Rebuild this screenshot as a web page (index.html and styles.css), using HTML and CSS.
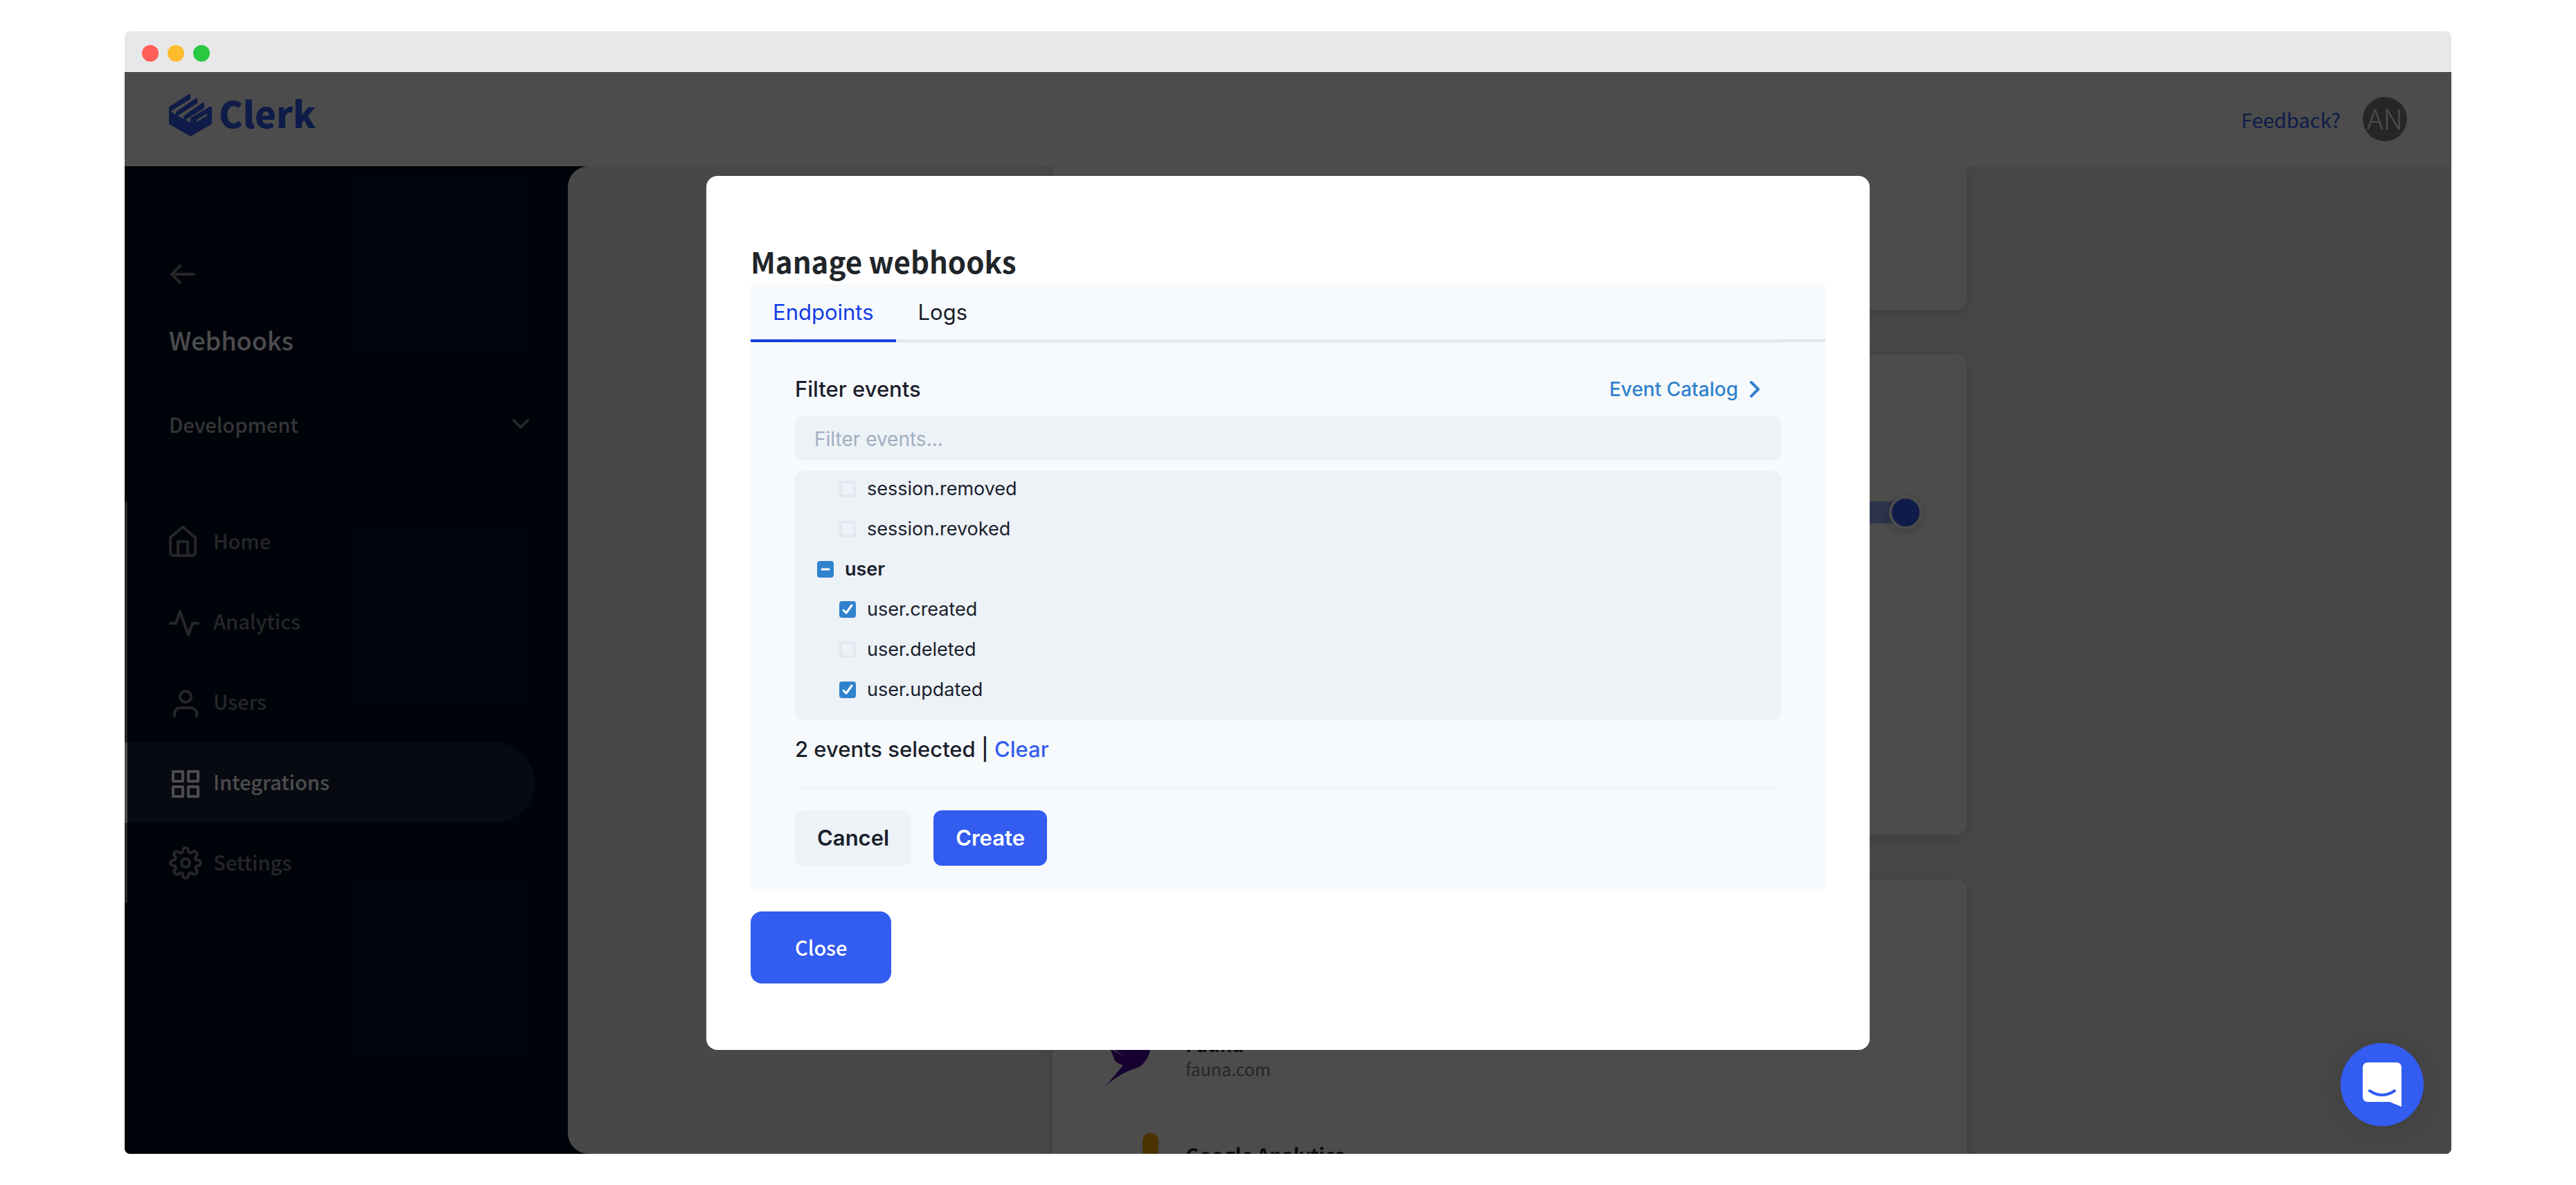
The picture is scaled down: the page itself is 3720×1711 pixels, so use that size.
FILE: index.html
```html
<!DOCTYPE html>
<html lang="en">
<head>
<meta charset="utf-8">
<title>Clerk – Manage webhooks</title>
<link rel="stylesheet" href="styles.css">
</head>
<body>
<div class="window">
  <div class="titlebar">
    <span class="dot dot-red"></span>
    <span class="dot dot-yellow"></span>
    <span class="dot dot-green"></span>
  </div>
  <div class="app">
    <header class="header">
      <a class="brand" href="#">
        <svg class="brand-mark" viewBox="0 0 62 62" aria-hidden="true">
          <path fill-rule="evenodd" d="M0 24L31 41V36q0-2 2-3L59 18q3-1 3 2v23L31 61 0 43zM40 40v-3L55 28v3z"/>
          <path d="M0 25V20q0-2 2-3L29 0q2-1 2 2v5L2 25z"/>
          <path d="M10 30v-3q0-2 2-3L39 6q2-1 2 2v5L13 31z"/>
          <path d="M21 36v-3q0-2 2-3L49 12q2-1 2 2v6L24 37z"/>
        </svg>
        <span class="brand-name">Clerk</span>
      </a>
      <div class="account">
        <a class="feedback" href="#">Feedback?</a>
        <span class="avatar">AN</span>
      </div>
    </header>
    <div class="body">
      <aside class="sidebar">
        <a class="back" href="#" aria-label="Back">
          <svg class="icon-back" viewBox="0 0 36 28"><path d="M2 14H34M14 2L2 14l12 12"/></svg>
        </a>
        <h2 class="app-name">Webhooks</h2>
        <button class="env" type="button">
          <span>Development</span>
          <svg class="icon-chevron" viewBox="0 0 28 18"><path d="M4 4l10 10L24 4"/></svg>
        </button>
        <nav class="nav">
          <a class="nav-item" href="#">
            <svg class="nav-icon" viewBox="0 0 48 48"><path d="M2 18L20 3l18 15v22a4 4 0 0 1-4 4H6a4 4 0 0 1-4-4z M13 43V24h14v19"/></svg>
            <span class="nav-text">Home</span>
          </a>
          <a class="nav-item" href="#">
            <svg class="nav-icon" viewBox="0 0 48 48"><path d="M2 26h8l6-17 12 34 6-17h8"/></svg>
            <span class="nav-text">Analytics</span>
          </a>
          <a class="nav-item" href="#">
            <svg class="nav-icon" viewBox="0 0 48 48"><circle cx="24" cy="16" r="8"/><path d="M8 44v-4a8 8 0 0 1 8-8h16a8 8 0 0 1 8 8v4"/></svg>
            <span class="nav-text">Users</span>
          </a>
          <a class="nav-item active" href="#">
            <svg class="nav-icon" viewBox="0 0 48 48"><path d="M6 8h14v14H6zM28 8h14v14H28zM6 30h14v14H6zM28 30h14v14H28z"/></svg>
            <span class="nav-text">Integrations</span>
          </a>
          <a class="nav-item" href="#">
            <svg class="nav-icon nav-icon-gear" viewBox="0 0 24 24"><circle cx="12" cy="12" r="3"/><path d="M19.400 15a1.650 1.650 0 0 0 .33 1.820l.06.06a2 2 0 1 1-2.830 2.830l-.06-.06a1.650 1.650 0 0 0-2.820 1.170V21a2 2 0 0 1-4 0v-.09a1.650 1.650 0 0 0-2.900-1.180l-.06.06a2 2 0 1 1-2.830-2.830l.06-.06A1.650 1.650 0 0 0 3.090 14H3a2 2 0 0 1 0-4h.09a1.650 1.650 0 0 0 1.180-2.900l-.06-.06a2 2 0 1 1 2.830-2.830l.06.06A1.650 1.650 0 0 0 10 3.090V3a2 2 0 0 1 4 0v.09a1.650 1.650 0 0 0 2.820 1.180l.06-.06a2 2 0 1 1 2.830 2.830l-.06.06A1.650 1.650 0 0 0 20.910 10H21a2 2 0 0 1 0 4h-.09a1.650 1.650 0 0 0-1.510 1z"/></svg>
            <span class="nav-text">Settings</span>
          </a>
        </nav>
      </aside>
      <main class="main">
        <section class="card card-top"></section>
        <section class="card card-toggle">
          <input class="switch" type="checkbox" role="switch" aria-label="Enabled" checked>
        </section>
        <section class="card card-list">
          <div class="integration">
            <svg class="integration-logo" viewBox="0 0 96 96">
              <path class="fauna" d="M10 0Q16 22 20 43L26 58q2 4 12 7L12 96Q26 82 44 74L62 67Q74 58 77 43V0z"/>
              <path class="fauna-line" d="M16 40L41 53 22 41z"/>
            </svg>
            <div>
              <h3 class="integration-name">Fauna</h3>
              <p class="integration-url">fauna.com</p>
            </div>
          </div>
          <div class="integration">
            <svg class="integration-logo" viewBox="0 0 96 96"><rect class="ga" x="66" y="3" width="23" height="90" rx="11"/></svg>
            <div>
              <h3 class="integration-name">Google Analytics</h3>
            </div>
          </div>
        </section>
      </main>
    </div>
    <div class="overlay">
      <div class="modal" role="dialog" aria-modal="true" aria-labelledby="modal-title">
        <h1 class="modal-title" id="modal-title">Manage webhooks</h1>
        <div class="panel">
          <div class="tabs" role="tablist">
            <button class="tab selected" type="button" role="tab" aria-selected="true">Endpoints</button>
            <button class="tab" type="button" role="tab" aria-selected="false">Logs</button>
          </div>
          <form class="panel-body">
            <div class="filter-head">
              <label class="filter-label" for="filter">Filter events</label>
              <a class="catalog" href="#">Event Catalog
                <svg class="icon-catalog" viewBox="0 0 16 24"><path d="M3 2l10 10L3 22"/></svg>
              </a>
            </div>
            <input class="filter-input" id="filter" type="text" placeholder="Filter events...">
            <div class="events">
              <label class="event child"><input class="check" type="checkbox">session.removed</label>
              <label class="event child"><input class="check" type="checkbox">session.revoked</label>
              <label class="event group"><span class="check-box"><input class="check" type="checkbox" checked><svg class="check-mark" viewBox="0 0 24 24"><path d="M7 12h10"/></svg></span>user</label>
              <label class="event child"><span class="check-box"><input class="check" type="checkbox" checked><svg class="check-mark" viewBox="0 0 24 24"><path d="M6 13l4 4 8-11"/></svg></span>user.created</label>
              <label class="event child"><input class="check" type="checkbox">user.deleted</label>
              <label class="event child"><span class="check-box"><input class="check" type="checkbox" checked><svg class="check-mark" viewBox="0 0 24 24"><path d="M6 13l4 4 8-11"/></svg></span>user.updated</label>
            </div>
            <p class="summary">2 events selected | <a class="clear" href="#">Clear</a></p>
            <div class="actions">
              <button class="btn btn-light" type="button">Cancel</button>
              <button class="btn btn-primary" type="button">Create</button>
            </div>
          </form>
        </div>
        <button class="close" type="button">Close</button>
      </div>
    </div>
    <button class="chat" type="button" aria-label="Open chat">
      <svg class="chat-icon" viewBox="0 0 56 64"><path class="bubble" d="M7 0h42a7 7 0 0 1 7 7v57l-17-7H7a7 7 0 0 1-7-7V7a7 7 0 0 1 7-7z"/><path class="smile" d="M10 41q18 12 36 0"/></svg>
    </button>
  </div>
</div>
</body>
</html>
```
FILE: styles.css
```css
:root {
  --blue: #335cf1;
  --link: #3182ce;
  --ink: #1a202c;
  --source: "Noto Sans CJK JP", "Noto Sans", sans-serif;
  --ui: Inter, "Liberation Sans", sans-serif;
}

*, *::before { box-sizing: border-box; }

body {
  margin: 0;
  background: #fff;
  color: var(--ink);
  font-family: var(--source);
}

h1, h2, h3, p { margin: 0; }
a { color: inherit; text-decoration: none; }
button { border: 0; background: none; padding: 0; font: inherit; color: inherit; cursor: pointer; }
svg { display: block; fill: none; stroke: currentColor; stroke-width: 4; stroke-linecap: round; stroke-linejoin: round; flex: none; }

/* Browser window */
.window {
  display: flex;
  flex-direction: column;
  height: calc(100vh - 90px);
  margin: 45px 180px;
  border-radius: 8px;
  overflow: hidden;
}

.titlebar {
  display: flex;
  align-items: center;
  gap: 13px;
  flex: none;
  height: 59px;
  padding: 4px 25px 0;
  background: #e8e8e8;
}

.dot { width: 24px; height: 24px; border-radius: 50%; }
.dot-red { background: #ff5f57; }
.dot-yellow { background: #ffbd2e; }
.dot-green { background: #28c840; }

.app {
  position: relative;
  display: flex;
  flex-direction: column;
  flex: 1;
  min-height: 0;
}

/* Header */
.header {
  display: flex;
  justify-content: space-between;
  align-items: center;
  flex: none;
  height: 136px;
  padding: 0 64px;
  background: #fff;
  color: var(--blue);
}

.brand { display: flex; align-items: center; gap: 10px; padding-bottom: 10px; }
.brand-mark { width: 62px; height: 62px; fill: currentColor; stroke: none; }
.brand-name { padding-bottom: 8px; font-size: 52px; line-height: 56px; font-weight: 900; }

.account { display: flex; align-items: center; gap: 32px; }
.feedback { font-size: 29px; line-height: 40px; }
.avatar {
  width: 64px;
  height: 64px;
  border-radius: 50%;
  background: #808080;
  color: #fff;
  font-size: 40px;
  line-height: 60px;
  font-weight: 300;
  text-align: center;
}

/* Sidebar */
.body { display: flex; flex: 1; min-height: 0; background: #000d24; }

.sidebar {
  flex: none;
  width: 640px;
  padding: 142px 0 0;
  color: #808080;
}

.back { display: block; width: 36px; margin-left: 66px; }
.icon-back { width: 36px; height: 28px; }

.app-name {
  margin: 52px 64px 0;
  color: #fff;
  font-size: 36px;
  line-height: 56px;
  font-weight: 500;
}

.env {
  display: flex;
  justify-content: space-between;
  align-items: center;
  width: 100%;
  margin: 74px 0 92px;
  padding: 0 54px 0 64px;
  color: #b3b3b3;
  font-size: 29px;
  line-height: 40px;
  font-weight: 500;
}

.icon-chevron { width: 28px; height: 18px; color: #808080; }

.nav { display: flex; flex-direction: column; }

.nav-item {
  display: flex;
  align-items: center;
  gap: 16px;
  width: 592px;
  height: 116px;
  padding-left: 60px;
  border-left: 4px solid #808080;
  font-size: 29px;
  line-height: 40px;
  font-weight: 500;
}

.nav-item.active {
  border-left-color: #fff;
  border-radius: 0 58px 58px 0;
  background: #1a2238;
  color: #fff;
}

.nav-text { padding-bottom: 4px; }
.nav-icon { width: 48px; height: 48px; }
.nav-icon-gear { stroke-width: 2; }

/* Main column */
.main {
  display: flex;
  flex-direction: column;
  align-items: center;
  gap: 64px;
  flex: 1;
  overflow: hidden;
  border-radius: 30px 0 0 30px;
  background: #f0f0f0;
}

.card {
  flex: none;
  width: 1320px;
  border-radius: 16px;
  background: #fff;
  box-shadow: 0 4px 20px rgba(0, 0, 0, 0.16);
}

.card-top { height: 208px; border-radius: 0 0 16px 16px; }
.card-toggle { display: flex; justify-content: flex-end; align-items: flex-start; height: 694px; padding: 204px 64px; }

.switch {
  display: flex;
  align-items: center;
  justify-content: flex-end;
  appearance: none;
  width: 112px;
  height: 32px;
  margin: 8px 0;
  border-radius: 16px;
  background: #99adf8;
}

.switch::before {
  content: "";
  flex: none;
  width: 48px;
  height: 48px;
  border: 4px solid #fff;
  border-radius: 50%;
  background: var(--blue);
  box-shadow: 0 4px 16px rgba(0, 0, 0, 0.2);
}

.card-list { padding: 203px 64px 64px; }
.integration { display: flex; align-items: flex-start; gap: 32px; height: 160px; }
.integration-logo { width: 96px; height: 96px; stroke: none; overflow: visible; }
.integration-name { margin-top: 14px; color: #262626; font-size: 28px; line-height: 40px; font-weight: 700; }
.integration-url { font-size: 25px; line-height: 32px; color: #808080; }
.fauna { fill: #4a00a0; }
.fauna-line { fill: #fff; }
.ga { fill: #f9ab00; }

/* Modal */
.overlay {
  position: absolute;
  inset: 0;
  display: grid;
  place-items: center;
  background: rgba(0, 0, 0, 0.7);
}

.modal {
  width: 50%;
  padding: 96px 64px;
  border-radius: 16px;
  background: #fff;
}

.modal-title {
  padding-bottom: 6px;
  color: #212529;
  font-size: 42px;
  line-height: 54px;
  font-weight: 700;
}

.panel { background: #f7fafc; font-family: var(--ui); }

.tabs {
  display: flex;
  height: 84px;
  border-bottom: 4px solid #e2e8f0;
}

.tab {
  height: 84px;
  padding: 2px 32px 0;
  border-bottom: 4px solid transparent;
  font-size: 31px;
  line-height: 48px;
}

.tab.selected { border-bottom-color: #143de4; color: #143de4; }

.panel-body { display: flex; flex-direction: column; margin: 0 64px; padding-bottom: 34px; border-top: 2px solid #edf2f7; }

.filter-head {
  display: flex;
  justify-content: space-between;
  align-items: center;
  padding: 42px 30px 14px 0;
}

.filter-label { font-size: 31px; line-height: 48px; font-weight: 500; }

.catalog {
  display: flex;
  align-items: center;
  gap: 16px;
  color: var(--link);
  font-size: 28px;
  line-height: 40px;
  font-weight: 500;
}

.icon-catalog { width: 16px; height: 24px; }

.filter-input {
  height: 64px;
  padding: 4px 28px 0;
  border: 0;
  border-radius: 12px;
  background: #edf2f7;
  color: var(--ink);
  font: 28px/40px var(--ui);
}

.filter-input::placeholder { color: #a0aec0; opacity: 1; }

.events {
  display: flex;
  flex-direction: column;
  gap: 18px;
  height: 360px;
  margin-top: 16px;
  padding: 6px 32px;
  border-radius: 12px;
  background: #edf2f7;
}

.event { display: flex; align-items: center; gap: 16px; font-size: 27px; line-height: 40px; }
.child { padding-left: 32px; }
.group { font-weight: 600; }

.check {
  appearance: none;
  width: 24px;
  height: 24px;
  margin: 0;
  border: 4px solid #e2e8f0;
  border-radius: 4px;
}

.check:checked { border-color: var(--link); background: var(--link); }
.check-box { display: grid; }
.check-box > * { grid-area: 1 / 1; }
.check-mark { width: 24px; height: 24px; color: #fff; stroke-width: 3; }

.summary {
  padding: 18px 0 30px;
  border-bottom: 2px solid #edf2f7;
  font-size: 31px;
  line-height: 48px;
  font-weight: 500;
}

.clear { color: var(--blue); }

.actions { display: flex; gap: 32px; margin-top: 32px; }

.btn {
  height: 80px;
  padding: 0 32px;
  border-radius: 12px;
  font-size: 31px;
  line-height: 48px;
  font-weight: 600;
}

.btn-light { background: #edf2f7; }
.btn-primary { background: var(--blue); color: #fff; }

.close {
  margin-top: 32px;
  height: 104px;
  padding: 0 64px 2px;
  border-radius: 16px;
  background: var(--blue);
  color: #fff;
  font-size: 29px;
  line-height: 40px;
  font-weight: 500;
}

/* Chat launcher */
.chat {
  position: absolute;
  right: 40px;
  bottom: 40px;
  display: grid;
  place-items: center;
  width: 120px;
  height: 120px;
  border-radius: 50%;
  background: var(--blue);
  box-shadow: 0 4px 64px rgba(0, 0, 0, 0.16);
}

.chat-icon { width: 56px; height: 64px; stroke: none; }
.bubble { fill: #fff; }
.smile { stroke: var(--blue); stroke-width: 4; }
```
